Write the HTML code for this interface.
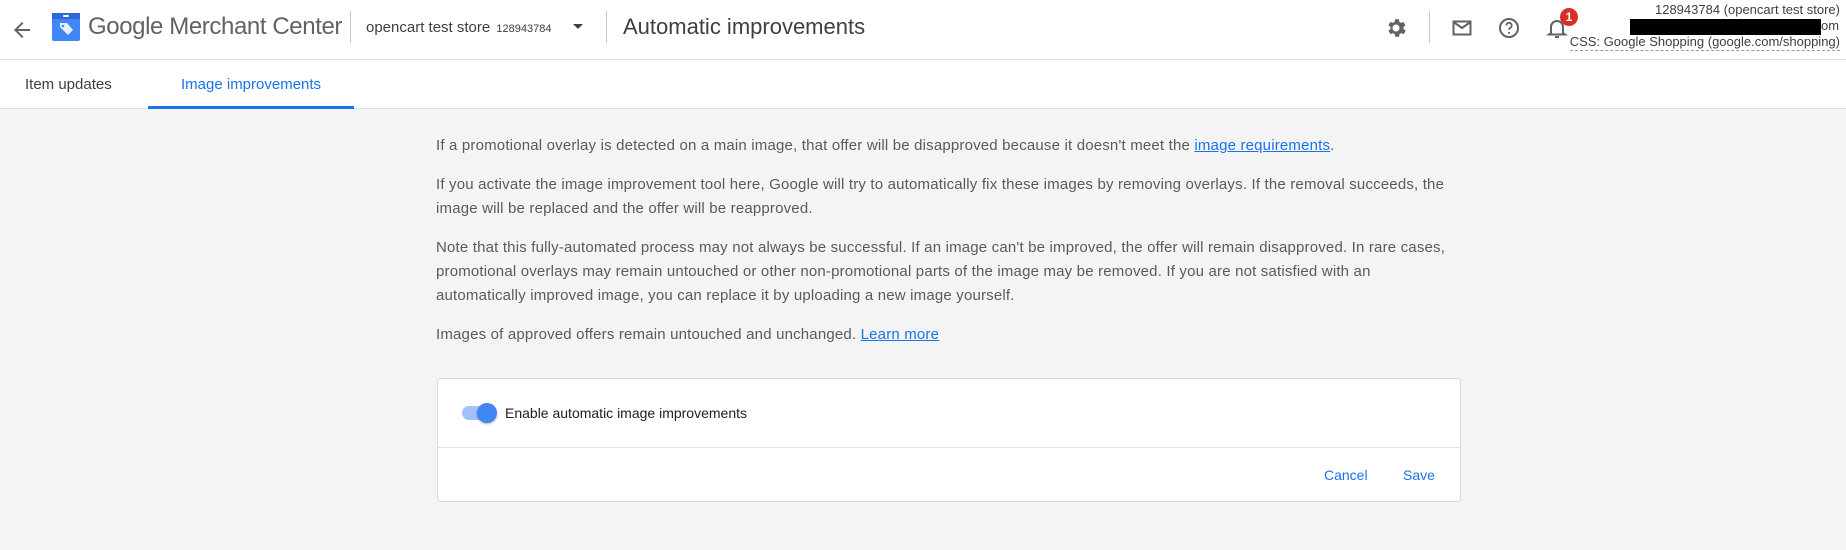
<!DOCTYPE html>
<html><head><meta charset="utf-8"><style>
*{margin:0;padding:0;box-sizing:border-box}
body{width:1846px;height:550px;overflow:hidden;background:#f4f4f4;font-family:"Liberation Sans",Arial,sans-serif;position:relative}
.hdr{position:absolute;left:0;top:0;width:1846px;height:109px;background:#fff;border-bottom:1px solid #e0e0e0}
.hline{position:absolute;left:0;top:59px;width:1846px;height:1px;background:#e0e0e0}
.abs{position:absolute;white-space:nowrap}
.sep{position:absolute;width:1px;background:#c8c8c8}
p.t{position:absolute;left:436px;width:1012px;font-size:15px;line-height:24px;color:#5a5a5a;letter-spacing:0.18px}
a{color:#1a73e8;text-decoration:underline}
</style></head><body>
<div class="hdr"></div>
<div class="hline"></div>
<svg class="abs" style="left:10px;top:18px" width="24" height="24" viewBox="0 0 24 24"><path d="M20 11H7.8l5.6-5.6L12 4l-8 8 8 8 1.4-1.4L7.8 13H20z" fill="#5f6368"/></svg>
<svg class="abs" style="left:52px;top:13px" width="28" height="28" viewBox="0 0 28 28"><rect x="0" y="0" width="28" height="28" rx="2" fill="#4285f4"/><rect x="0" y="0" width="28" height="6" fill="#3367d6"/><rect x="11" y="2" width="6" height="2" rx="1" fill="#fff"/><path d="M8 10h7l6 7-5 5-8-8z" fill="#e8f0fe"/><circle cx="11" cy="13" r="1.3" fill="#4285f4"/></svg>
<div class="abs" style="left:88px;top:13px;font-size:24px;color:#5f6368;letter-spacing:-0.4px">Google Merchant Center</div>
<div class="sep" style="left:350px;top:11px;height:32px"></div>
<div class="abs" style="left:366px;top:19px;font-size:15px;color:#3c4043">opencart test store <span style="font-size:11px;margin-left:2px">128943784</span></div>
<svg class="abs" style="left:573px;top:24px" width="10" height="6"><path d="M0 0h10L5 5z" fill="#3c4043"/></svg>
<div class="sep" style="left:606px;top:11px;height:32px"></div>
<div class="abs" style="left:623px;top:14px;font-size:22px;color:#3c4043">Automatic improvements</div>
<svg class="abs" style="left:1384px;top:16px" width="24" height="24" viewBox="0 0 24 24"><path fill="#5f6368" d="M19.4 13a7.5 7.5 0 0 0 0-2l2.1-1.6-2-3.5-2.5 1a7 7 0 0 0-1.7-1L15 3.3h-4l-.4 2.6a7 7 0 0 0-1.700 1l-2.5-1-2 3.5L6.6 11a7.5 7.5 0 0 0 0 2l-2.1 1.6 2 3.5 2.5-1a7 7 0 0 0 1.7 1l.4 2.6h4l.4-2.6a7 7 0 0 0 1.7-1l2.5 1 2-3.5zM12 15.5A3.5 3.5 0 1 1 12 8.5a3.5 3.5 0 0 1 0 7z"/><circle cx="12" cy="12" r="2" fill="#fff"/></svg>
<div class="sep" style="left:1429px;top:11px;height:32px"></div>
<svg class="abs" style="left:1450px;top:16px" width="24" height="24" viewBox="0 0 24 24"><path fill="none" stroke="#5f6368" stroke-width="2" d="M3.5 5.5h17v13h-17zM3.5 6l8.5 6 8.5-6"/></svg>
<svg class="abs" style="left:1497px;top:16px" width="24" height="24" viewBox="0 0 24 24"><circle cx="12" cy="12" r="9" fill="none" stroke="#5f6368" stroke-width="2"/><path d="M9.3 9.5a2.7 2.7 0 1 1 3.7 2.5c-.8.4-1 .9-1 1.8" fill="none" stroke="#5f6368" stroke-width="1.8"/><circle cx="12" cy="16.8" r="1.1" fill="#5f6368"/></svg>
<svg class="abs" style="left:1545px;top:16px" width="24" height="24" viewBox="0 0 24 24"><path d="M6 17V11a6 6 0 0 1 12 0v6l2 1.5H4z" fill="none" stroke="#5f6368" stroke-width="2"/><path d="M10 21h4" stroke="#5f6368" stroke-width="2"/></svg>
<div class="abs" style="left:1560px;top:8px;width:18px;height:18px;border-radius:9px;background:#d93025;color:#fff;font-size:12px;font-weight:bold;text-align:center;line-height:18px">1</div>
<div class="abs" style="right:6px;top:2px;font-size:13px;color:#3c4043;text-align:right;line-height:16px">128943784 (opencart test store)</div>
<div class="abs" style="left:1630px;top:19px;width:191px;height:16px;background:#000"></div>
<div class="abs" style="left:1821px;top:18px;font-size:13px;color:#3c4043">om</div>
<div class="abs" style="right:6px;top:34px;font-size:13px;color:#3c4043;line-height:16px;border-bottom:1px dashed #999">CSS: Google Shopping (google.com/shopping)</div>
<div class="abs" style="left:25px;top:76px;font-size:15px;color:#3c4043">Item updates</div>
<div class="abs" style="left:181px;top:76px;font-size:15px;color:#1a73e8">Image improvements</div>
<div class="abs" style="left:148px;top:106px;width:206px;height:3px;background:#1a73e8"></div>

<p class="t" style="top:134px">If a promotional overlay is detected on a main image, that offer will be disapproved because it doesn't meet the <a>image requirements</a>.</p>
<p class="t" style="top:173px">If you activate the image improvement tool here, Google will try to automatically fix these images by removing overlays. If the removal succeeds, the image will be replaced and the offer will be reapproved.</p>
<p class="t" style="top:236px">Note that this fully-automated process may not always be successful. If an image can't be improved, the offer will remain disapproved. In rare cases, promotional overlays may remain untouched or other non-promotional parts of the image may be removed. If you are not satisfied with an automatically improved image, you can replace it by uploading a new image yourself.</p>
<p class="t" style="top:323px">Images of approved offers remain untouched and unchanged. <a>Learn more</a></p>

<div class="abs" style="left:437px;top:378px;width:1024px;height:124px;background:#fff;border:1px solid #dadada;border-radius:4px"></div>
<div class="abs" style="left:438px;top:447px;width:1022px;height:1px;background:#e0e0e0"></div>
<div class="abs" style="left:462px;top:406px;width:30px;height:14px;border-radius:7px;background:#a1c2fa"></div>
<div class="abs" style="left:477px;top:403px;width:20px;height:20px;border-radius:10px;background:#4285f4;box-shadow:0 1px 2px rgba(0,0,0,.3)"></div>
<div class="abs" style="left:505px;top:405px;font-size:14px;color:#202124">Enable automatic image improvements</div>
<div class="abs" style="left:1324px;top:467px;font-size:14px;color:#1a73e8">Cancel</div>
<div class="abs" style="left:1403px;top:467px;font-size:14px;color:#1a73e8">Save</div>
</body></html>
